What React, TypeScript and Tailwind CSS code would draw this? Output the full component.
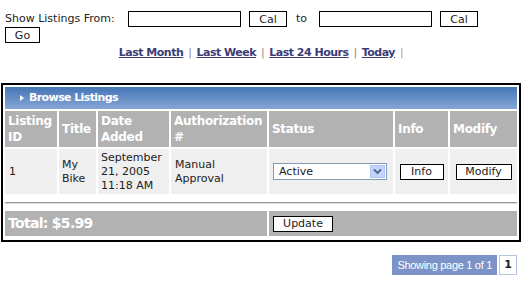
import React from 'react';

const verdana = { fontFamily: '"DejaVu Sans", Verdana, sans-serif' };

const headers = [
  { label: 'Listing ID', w: 'w-[52px]' },
  { label: 'Title', w: 'w-[37px]' },
  { label: 'Date Added', w: 'w-[71px]' },
  { label: 'Authorization #', w: 'w-[96px]' },
  { label: 'Status', w: 'w-[124px]' },
  { label: 'Info', w: 'w-[53px]' },
  { label: 'Modify', w: 'w-[67px]' },
];

const SmallButton: React.FC<{ label: string; className?: string }> = ({ label, className }) => (
  <button
    type="button"
    className={
      'block h-[16px] border border-black bg-white text-[11px] leading-none text-[#222] ' + (className || '')
    }
  >
    {label}
  </button>
);

export default function App() {
  return (
    <div className="w-[522px] h-[282px] bg-white text-[#222]" style={verdana}>
      {/* Date filter */}
      <div className="pl-[5px] pt-[11px]">
        <div className="flex items-center h-[16px] text-[11px]">
          <span className="w-[123px] pt-[1px]">Show Listings From:</span>
          <input className="w-[113px] h-[16px] border border-black bg-white" />
          <SmallButton label="Cal" className="ml-[8px] w-[38px]" />
          <span className="ml-[9px] w-[23px] pt-[1px]">to</span>
          <input className="w-[113px] h-[16px] border border-black bg-white" />
          <SmallButton label="Cal" className="ml-[8px] w-[38px]" />
        </div>
        <SmallButton label="Go" className="w-[35px]" />
      </div>

      <div className="flex justify-center items-center gap-[5px] mt-[2px] h-[16px] text-[11px] font-bold tracking-[-0.5px]">
        <a className="underline text-[#3c3c78]">Last Month</a>
        <span className="font-normal text-[#888]">|</span>
        <a className="underline text-[#3c3c78]">Last Week</a>
        <span className="font-normal text-[#888]">|</span>
        <a className="underline text-[#3c3c78]">Last 24 Hours</a>
        <span className="font-normal text-[#888]">|</span>
        <a className="underline text-[#3c3c78]">Today</a>
        <span className="font-normal text-[#d08a8a]">|</span>
      </div>

      {/* Listings box */}
      <div className="ml-[1px] mt-[22px] w-[520px] border-2 border-black p-[2px]">
        <div className="flex items-center h-[22px] pl-[13px] bg-gradient-to-b from-[#4576b6] to-[#86a5d6] text-white text-[11px] font-bold tracking-[-0.6px]">
          <svg width="8" height="8" viewBox="0 0 8 8" className="mr-[3px]">
            <path d="M2 1 L6 4 L2 7 Z" fill="#ffffff" />
          </svg>
          Browse Listings
        </div>
        <table
          className="table-fixed border-separate"
          style={{ borderSpacing: '2px', margin: '0 -2px', width: 'calc(100% + 4px)' }}
        >
          <colgroup>
            {headers.map((h) => (
              <col key={h.label} className={h.w} />
            ))}
          </colgroup>
          <thead>
            <tr className="h-[36px]">
              {headers.map((h) => (
                <th
                  key={h.label}
                  className="bg-[#b2b2b2] text-white text-left align-middle px-[3px] text-[12px] tracking-[-0.3px] font-bold leading-[16px]"
                >
                  {h.label}
                </th>
              ))}
            </tr>
          </thead>
          <tbody>
            <tr className="h-[45px] text-[11px] leading-[14px]">
              <td className="bg-[#efefef] px-[4px] align-middle">1</td>
              <td className="bg-[#efefef] px-[3px] align-middle">My Bike</td>
              <td className="bg-[#efefef] px-[3px] align-middle">September 21, 2005 11:18 AM</td>
              <td className="bg-[#efefef] px-[4px] align-middle">Manual Approval</td>
              <td className="bg-[#efefef] pl-[4px] align-middle">
                <div className="flex items-center w-[114px] h-[17px] border border-[#7f9db9] bg-white">
                  <span className="flex-1 pl-[5px]">Active</span>
                  <span className="w-[15px] h-[13px] mr-[1px] bg-[#c3d3fd] border border-[#b0c4f0] flex items-center justify-center">
                    <svg width="9" height="7" viewBox="0 0 9 7">
                      <path d="M1 1.5 L4.5 5 L8 1.5" fill="none" stroke="#4d6185" strokeWidth="1.8" />
                    </svg>
                  </span>
                </div>
              </td>
              <td className="bg-[#efefef] align-middle">
                <SmallButton label="Info" className="mx-auto w-[44px]" />
              </td>
              <td className="bg-[#efefef] align-middle">
                <SmallButton label="Modify" className="mx-auto w-[56px]" />
              </td>
            </tr>
            <tr className="h-[13px]">
              <td colSpan={7} className="align-middle">
                <div className="h-[2px] bg-[#9a9a9a] border-b border-[#d8d8d8]" />
              </td>
            </tr>
            <tr className="h-[25px]">
              <td
                colSpan={4}
                className="bg-[#b2b2b2] text-white font-bold text-[14px] tracking-[-0.7px] pl-[3px] align-middle"
              >
                Total: $5.99
              </td>
              <td colSpan={3} className="bg-[#b2b2b2] pl-[4px] align-middle">
                <SmallButton label="Update" className="w-[60px]" />
              </td>
            </tr>
          </tbody>
        </table>
      </div>

      {/* Pagination */}
      <div className="flex justify-end mt-[13px] pr-[5px]">
        <div
          className="flex items-center h-[20px] px-[5px] bg-[#7b93c6] text-white text-[11px] tracking-[-0.3px]"
          style={{ fontFamily: '"Liberation Sans", Tahoma, sans-serif' }}
        >
          Showing page 1 of 1
        </div>
        <div className="ml-[2px] flex items-center justify-center w-[18px] h-[20px] border border-[#b7c4e0] bg-white text-[11px] font-bold text-[#222]">
          1
        </div>
      </div>
    </div>
  );
}
